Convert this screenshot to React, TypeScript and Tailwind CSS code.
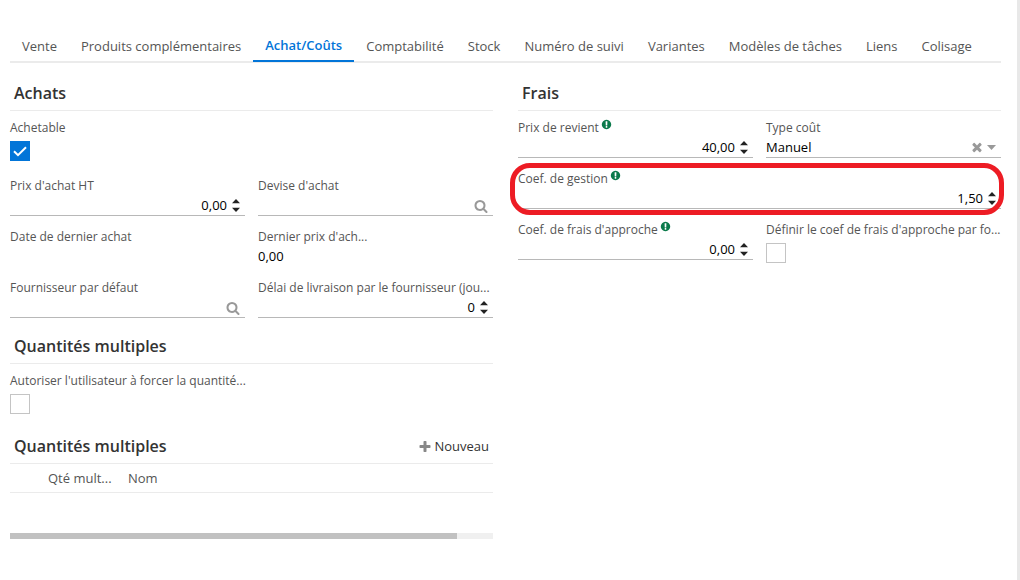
import React, { useId, useState } from "react";
import clsx from "clsx";

const TABS = [
  "Vente",
  "Produits complémentaires",
  "Achat/Coûts",
  "Comptabilité",
  "Stock",
  "Numéro de suivi",
  "Variantes",
  "Modèles de tâches",
  "Liens",
  "Colisage",
];

const ICONS = {
  search:
    "M1216 832q0-185-131.5-316.5t-316.5-131.5-316.5 131.5-131.5 316.5 131.5 316.5 316.5 131.5 316.5-131.5 131.5-316.5zm512 832q0 52-38 90t-90 38q-54 0-90-38l-343-342q-179 124-399 124-143 0-273.5-55.5t-225-150-150-225-55.5-273.5 55.5-273.5 150-225 225-150 273.5-55.5 273.5 55.5 225 150 150 225 55.5 273.5q0 220-124 399l343 343q37 37 37 90z",
  times:
    "M1490 1322q0 40-28 68l-136 136q-28 28-68 28t-68-28l-294-294-294 294q-28 28-68 28t-68-28l-136-136q-28-28-28-68t28-68l294-294-294-294q-28-28-28-68t28-68l136-136q28-28 68-28t68 28l294 294 294-294q28-28 68-28t68 28l136 136q28 28 28 68t-28 68l-294 294 294 294q28 28 28 68z",
  plus: "M1600 736v192q0 40-28 68t-68 28h-416v416q0 40-28 68t-68 28h-192q-40 0-68-28t-28-68v-416h-416q-40 0-68-28t-28-68v-192q0-40 28-68t68-28h416v-416q0-40 28-68t68-28h192q40 0 68 28t28 68v416h416q40 0 68 28t28 68z",
  info: "M896 128q209 0 385.5 103t279.5 279.5 103 385.5-103 385.5-279.5 279.5-385.5 103-385.5-103-279.5-279.5-103-385.5 103-385.5 279.5-279.5 385.5-103zm128 1247v-190q0-14-9-23.5t-22-9.5h-192q-13 0-23 10t-10 23v190q0 13 10 23t23 10h192q13 0 22-9.5t9-23.5zm-2-344l18-621q0-12-10-18-10-8-24-8h-220q-14 0-24 8-10 6-10 18l17 621q0 10 10 17.5t24 7.5h185q14 0 23.5-7.5t10.5-17.5z",
};

const Icon = ({ name, className }: { name: keyof typeof ICONS; className?: string }) => (
  <svg viewBox="0 0 1792 1792" fill="currentColor" aria-hidden="true" className={clsx("shrink-0", className)}>
    <path d={ICONS[name]} />
  </svg>
);

type FieldLabelProps = { htmlFor?: string; text: string; hint?: boolean };

const FieldLabel = ({ htmlFor, text, hint }: FieldLabelProps) => (
  <label htmlFor={htmlFor} className="flex h-[19px] items-center gap-[2px] text-xs whitespace-nowrap text-[#555]">
    <span>{text}</span>
    {hint && <Icon name="info" className="mb-[6px] size-[11px] text-[#0b7a4b]" />}
  </label>
);

const inputRow = "flex h-[21px] items-center border-b border-[#b8b8b8]";

const NumberField = ({ label, initial, hint }: { label: string; initial: string; hint?: boolean }) => {
  const id = useId();
  const [value, setValue] = useState(initial);

  return (
    <div>
      <FieldLabel htmlFor={id} text={label} hint={hint} />
      <div className={inputRow}>
        <input
          id={id}
          inputMode="decimal"
          value={value}
          onChange={(e) => setValue(e.target.value)}
          className="h-5 min-w-0 flex-1 text-right text-[13px] text-black outline-none"
        />
        <svg viewBox="0 0 8 13" className="mx-[5px] h-[13px] w-2 shrink-0 fill-[#222]" aria-hidden="true">
          <path d="M4 0 8 4.2H0zM0 8.8h8L4 13z" />
        </svg>
      </div>
    </div>
  );
};

const SearchField = ({ label }: { label: string }) => {
  const id = useId();
  return (
    <div>
      <FieldLabel htmlFor={id} text={label} />
      <div className={inputRow}>
        <input id={id} type="text" className="h-5 min-w-0 flex-1 text-[13px] text-black outline-none" />
        <button type="button" aria-label="Rechercher" className="mt-[2px] mr-[5px] text-[#999]">
          <Icon name="search" className="size-[14px]" />
        </button>
      </div>
    </div>
  );
};

const CheckField = ({ label, initial = false }: { label: string; initial?: boolean }) => {
  const id = useId();
  const [checked, setChecked] = useState(initial);

  return (
    <div>
      <FieldLabel htmlFor={id} text={label} />
      <div className="relative my-1 size-5">
        <input
          id={id}
          type="checkbox"
          checked={checked}
          onChange={(e) => setChecked(e.target.checked)}
          className="block size-5 appearance-none border border-[#c4c4c4] bg-white checked:border-[#0275d8] checked:bg-[#0275d8]"
        />
        {checked && (
          <svg viewBox="0 0 20 20" className="pointer-events-none absolute inset-0 size-5" aria-hidden="true">
            <path d="M4 10.2 8 14.2 16 6.2" fill="none" stroke="white" strokeWidth="2" />
          </svg>
        )}
      </div>
    </div>
  );
};

const SelectField = ({ label }: { label: string }) => {
  const id = useId();
  const [value, setValue] = useState("Manuel");

  return (
    <div>
      <FieldLabel htmlFor={id} text={label} />
      <div className={clsx(inputRow, "text-[#999]")}>
        <select
          id={id}
          value={value}
          onChange={(e) => setValue(e.target.value)}
          className="h-5 min-w-0 flex-1 appearance-none pt-px text-[13px] text-black outline-none"
        >
          <option value=""></option>
          <option value="Manuel">Manuel</option>
        </select>
        <button type="button" aria-label="Effacer" onClick={() => setValue("")} className="mr-[3px]">
          <Icon name="times" className="size-[14px]" />
        </button>
        <svg viewBox="0 0 9 5" className="mr-[5px] h-[5px] w-[9px] shrink-0 fill-current" aria-hidden="true">
          <path d="M0 0h9L4.5 5z" />
        </svg>
      </div>
    </div>
  );
};

const SectionTitle = ({ title, children }: { title: string; children?: React.ReactNode }) => (
  <div className="mb-[7px] flex h-[35px] items-center justify-between border-b border-[#ebebeb] px-1">
    <h2 className="text-base font-semibold text-[#333]">{title}</h2>
    {children}
  </div>
);

const fieldGrid = "grid grid-cols-2 gap-x-[13px] gap-y-[11px]";

const App: React.FC = () => {
  const [active, setActive] = useState("Achat/Coûts");

  return (
    <div className="min-h-screen border-r-[3px] border-[#e8e8e8] bg-white pt-[31px] pr-4 pl-[10px] font-['Open_Sans','Noto_Sans',sans-serif]">
      <div role="tablist" className="flex border-b-2 border-[#ebebeb] text-[13px] whitespace-nowrap text-[#555]">
        {TABS.map((tab) => (
          <button
            key={tab}
            type="button"
            role="tab"
            aria-selected={tab === active}
            onClick={() => setActive(tab)}
            className={clsx(
              "px-3",
              tab === active
                ? "-mb-px h-[31px] border-b-2 border-[#0275d8] font-semibold text-[#0275d8]"
                : "h-[30px] pt-[2px]"
            )}
          >
            {tab}
          </button>
        ))}
      </div>

      <main className="grid grid-cols-2 gap-x-[25px] pt-[13px]">
        <div className="flex min-w-0 flex-col gap-[11px]">
          <section>
            <SectionTitle title="Achats" />
            <div className={fieldGrid}>
              <div className="col-span-2">
                <CheckField label="Achetable" initial />
              </div>
              <NumberField label="Prix d'achat HT" initial="0,00" />
              <SearchField label="Devise d'achat" />
              <FieldLabel text="Date de dernier achat" />
              <div>
                <FieldLabel text="Dernier prix d'ach..." />
                <p className="h-[21px] text-[13px] leading-5 text-black">0,00</p>
              </div>
              <SearchField label="Fournisseur par défaut" />
              <NumberField label="Délai de livraison par le fournisseur (jou..." initial="0" />
            </div>
          </section>

          <section>
            <SectionTitle title="Quantités multiples" />
            <CheckField label="Autoriser l'utilisateur à forcer la quantité..." />
          </section>

          <section>
            <SectionTitle title="Quantités multiples">
              <button type="button" className="flex items-center gap-[2px] pt-px text-[13px] text-[#333]">
                <Icon name="plus" className="size-[14px] text-[#888]" />
                Nouveau
              </button>
            </SectionTitle>
            <table className="-mt-[7px] w-full table-fixed border-b border-[#ebebeb] text-left text-[13px] text-[#555]">
              <thead>
                <tr className="h-7">
                  <td className="w-[38px]"></td>
                  <th scope="col" className="w-20 pt-[2px] font-normal">Qté mult...</th>
                  <th scope="col" className="pt-[2px] font-normal">Nom</th>
                </tr>
              </thead>
            </table>
            <div className="mt-10 h-[6px] bg-[#f0f0f0]">
              <div className="h-full w-[92.5%] bg-[#c1c1c1]"></div>
            </div>
          </section>
        </div>

        <section className="min-w-0">
          <SectionTitle title="Frais" />
          <div className={fieldGrid}>
            <NumberField label="Prix de revient" initial="40,00" hint />
            <SelectField label="Type coût" />
            <div className="relative col-span-2">
              <NumberField label="Coef. de gestion" initial="1,50" hint />
              <div className="pointer-events-none absolute -inset-y-[6px] -right-[3px] -left-2 rounded-[20px] border-5 border-[#ed1c24]"></div>
            </div>
            <NumberField label="Coef. de frais d'approche" initial="0,00" hint />
            <CheckField label="Définir le coef de frais d'approche par fo..." />
          </div>
        </section>
      </main>
    </div>
  );
};

export default App;
